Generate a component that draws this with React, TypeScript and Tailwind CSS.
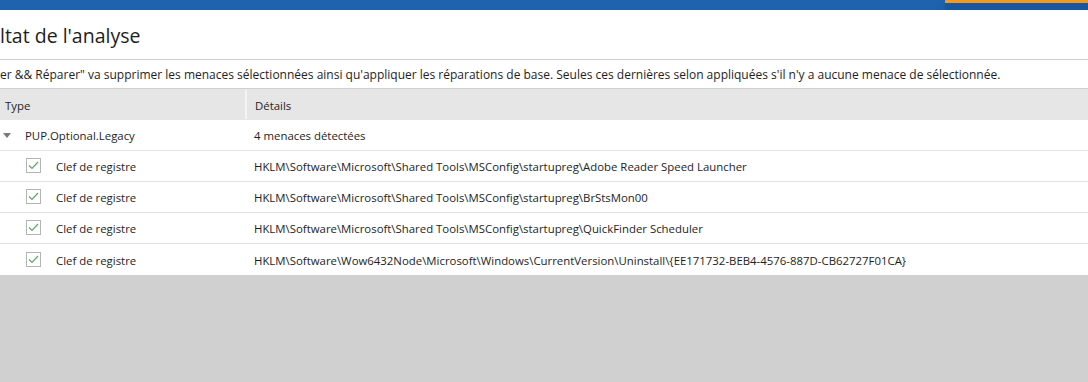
const rows = [
  'HKLM\\Software\\Microsoft\\Shared Tools\\MSConfig\\startupreg\\Adobe Reader Speed Launcher',
  'HKLM\\Software\\Microsoft\\Shared Tools\\MSConfig\\startupreg\\BrStsMon00',
  'HKLM\\Software\\Microsoft\\Shared Tools\\MSConfig\\startupreg\\QuickFinder Scheduler',
  'HKLM\\Software\\Wow6432Node\\Microsoft\\Windows\\CurrentVersion\\Uninstall\\{EE171732-BEB4-4576-887D-CB62727F01CA}',
];

function Check() {
  return (
    <span className="flex h-[15px] w-[15px] items-center justify-center border border-[#b4b4b4] bg-white">
      <svg width="11" height="9" viewBox="0 0 11 9" fill="none">
        <path d="M1 4.5 L4 7.5 L10 1" stroke="#5aa864" strokeWidth="1.2" />
      </svg>
    </span>
  );
}

export default function App() {
  return (
    <div className="flex h-[382px] w-[1088px] flex-col overflow-hidden bg-[#d0d0d0] text-[#1e1e1e] [font-family:'Open_Sans',sans-serif]">
      <div className="flex h-[10px] bg-[#1f62ad]">
        <div className="flex-1" />
        <div className="w-[143px] border-t-[3px] border-[#f39a1e] bg-[#1b56a0] shadow-[0_4px_12px_rgba(0,0,0,0.12)]" />
      </div>
      <div className="bg-white">
        <div className="flex h-[50px] items-center border-b border-[#cfcfcf] pt-[3px] text-[19.5px] leading-none">
          ltat de l'analyse
        </div>
        <div className="flex h-[29px] items-center border-b border-[#cfcfcf] pt-[2px] text-[12px]">
          er &amp;&amp; Réparer" va supprimer les menaces sélectionnées ainsi qu'appliquer les réparations de base. Seules ces dernières selon appliquées s'il n'y a aucune menace de sélectionnée.
        </div>
        <div className="flex h-[31px] items-center bg-[#e6e6e6] pt-[2px] text-[11.4px]">
          <div className="w-[245px] pl-[5px]">Type</div>
          <div className="-mt-[2px] h-full w-[2px] bg-[#f4f4f4]" />
          <div className="pl-[8px]">Détails</div>
        </div>
        <div className="flex h-[31px] items-center border-b border-[#e2e2e2] pt-[2px] text-[11.4px]">
          <div className="flex w-[247px] items-center">
            <span className="ml-[3px] mr-[14px] h-0 w-0 border-x-[4px] border-t-[5px] border-x-transparent border-t-[#7a7a7a]" />
            PUP.Optional.Legacy
          </div>
          <div className="pl-[7px]">4 menaces détectées</div>
        </div>
        {rows.map((r) => (
          <div key={r} className="flex h-[31px] items-center border-b border-[#e2e2e2] pt-[2px] text-[11.4px] last:border-b-0">
            <div className="flex w-[247px] items-center">
              <span className="-mt-[2px] ml-[26px] mr-[15px]">
                <Check />
              </span>
              Clef de registre
            </div>
            <div className="pl-[7px]">{r}</div>
          </div>
        ))}
      </div>
      <div className="flex-1" />
    </div>
  );
}
